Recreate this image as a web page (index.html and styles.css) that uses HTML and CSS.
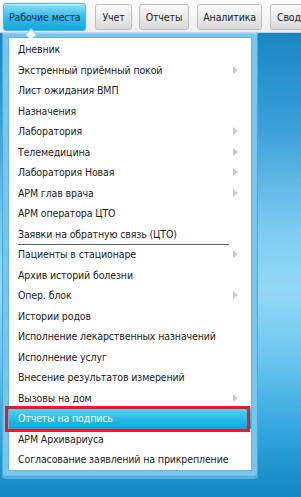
FILE: index.html
```html
<!DOCTYPE html>
<html lang="ru">
<head>
  <meta charset="UTF-8" />
  <title>Рабочие места</title>
  <link rel="stylesheet" href="styles.css">
</head>
<body>

  <div class="topbar">
    <button class="tab active">Рабочие места</button>
    <button class="tab">Учет</button>
    <button class="tab">Отчеты</button>
    <button class="tab wide">Аналитика</button>
    <button class="tab">Свод</button>
  </div>

  <div class="workspace">
    <div class="menu-frame">
      <ul class="menu">
        <li class="item">Дневник</li>
        <li class="item sub">Экстренный приёмный покой</li>
        <li class="item">Лист ожидания ВМП</li>
        <li class="item">Назначения</li>
        <li class="item sub">Лаборатория</li>
        <li class="item sub">Телемедицина</li>
        <li class="item sub">Лаборатория Новая</li>
        <li class="item sub">АРМ глав врача</li>
        <li class="item">АРМ оператора ЦТО</li>
        <li class="item">Заявки на обратную связь (ЦТО)</li>
        <li class="sep"></li>
        <li class="item sub">Пациенты в стационаре</li>
        <li class="item">Архив историй болезни</li>
        <li class="item sub">Опер. блок</li>
        <li class="item">Истории родов</li>
        <li class="item">Исполнение лекарственных назначений</li>
        <li class="item">Исполнение услуг</li>
        <li class="item">Внесение результатов измерений</li>
        <li class="item sub">Вызовы на дом</li>
        <li class="item current">Отчеты на подпись</li>
        <li class="item">АРМ Архивариуса</li>
        <li class="item">Согласование заявлений на прикрепление</li>
      </ul>
    </div>
  </div>

</body>
</html>
```

FILE: styles.css
```css
body {
  margin: 0;
  font-family: "DejaVu Sans Condensed", "DejaVu Sans", sans-serif;
  font-size: 10.5px;
  letter-spacing: -0.12px;
  color: #1b1b1b;
  overflow: hidden;
}
.topbar {
  height: 33px;
  display: flex;
  align-items: flex-start;
  gap: 7px;
  padding: 3px 0 0 3px;
  box-sizing: border-box;
  background: linear-gradient(#fefefe, #eeeeee);
  border-bottom: 1px solid #c8d3da;
  white-space: nowrap;
  overflow: hidden;
}
.tab {
  flex: none;
  height: 26px;
  margin-top: 1px;
  padding: 0 6px;
  font: inherit;
  letter-spacing: inherit;
  color: #1e1e1e;
  border: 1px solid #bcbcbc;
  border-radius: 3px;
  background: linear-gradient(#fbfbfb, #e9e9e9 55%, #d9d9d9);
  box-shadow: inset 0 1px 0 #fff;
}
.tab.wide {
  margin: 1px 1px 0 1px;
  padding: 0 5px;
}
.tab.active {
  height: 28px;
  margin-top: 0;
  margin-right: 2px;
  padding: 0 5px;
  color: #0d2c3b;
  border-color: #55b8dc;
  background: linear-gradient(#8fe0f8, #3cc0ea 45%, #12a6da);
  box-shadow: 0 0 2px #9fd9ef, inset 0 1px 0 #c4f0fc;
}
.workspace {
  height: 464px;
  padding: 0 0 0 2px;
  background: linear-gradient(#1787c2 0%, #3a9fd6 20%, #7ccbf0 42%, #93d9f7 55%, #6cc6ef 70%, #34a7dd 85%, #1287c3 100%);
  box-sizing: border-box;
}
.menu-frame {
  position: relative;
  width: 256px;
  padding: 3px 5px 5px 5px;
  box-sizing: border-box;
  background: #78c5ed;
  border: 1px solid #4ba6da;
  border-top-color: #8fd2f3;
  border-radius: 0 0 4px 4px;
  box-shadow: 0 2px 0 rgba(160, 220, 245, 0.45);
}
.menu-frame::before {
  content: "";
  position: absolute;
  top: -4px;
  left: 24px;
  width: 7px;
  height: 7px;
  background: #fff;
  border: 1px solid #7cc4ec;
  border-right: none;
  border-bottom: none;
  transform: rotate(45deg);
}
.menu {
  list-style: none;
  margin: 0;
  padding: 1px 0 0 0;
  background: #fff;
  border: 1px solid #62b4e2;
}
.item {
  position: relative;
  height: 20.5px;
  line-height: 20.5px;
  padding-left: 9px;
  white-space: nowrap;
}
.item.sub::after {
  content: "";
  position: absolute;
  right: 13px;
  top: 6px;
  border-left: 5px solid #cbcbcb;
  border-top: 4px solid transparent;
  border-bottom: 4px solid transparent;
}
.sep {
  height: 1px;
  margin: 0 22px -1px 9px;
  background: #55655b;
}
.item.current {
  color: #fff;
  background: linear-gradient(#5dd3f3, #2bbce9 50%, #0ea6da);
}
.item.current::before {
  content: "";
  position: absolute;
  top: -2px;
  bottom: -3px;
  left: -4px;
  right: 1px;
  border: 3px solid #e41c24;
}
```
